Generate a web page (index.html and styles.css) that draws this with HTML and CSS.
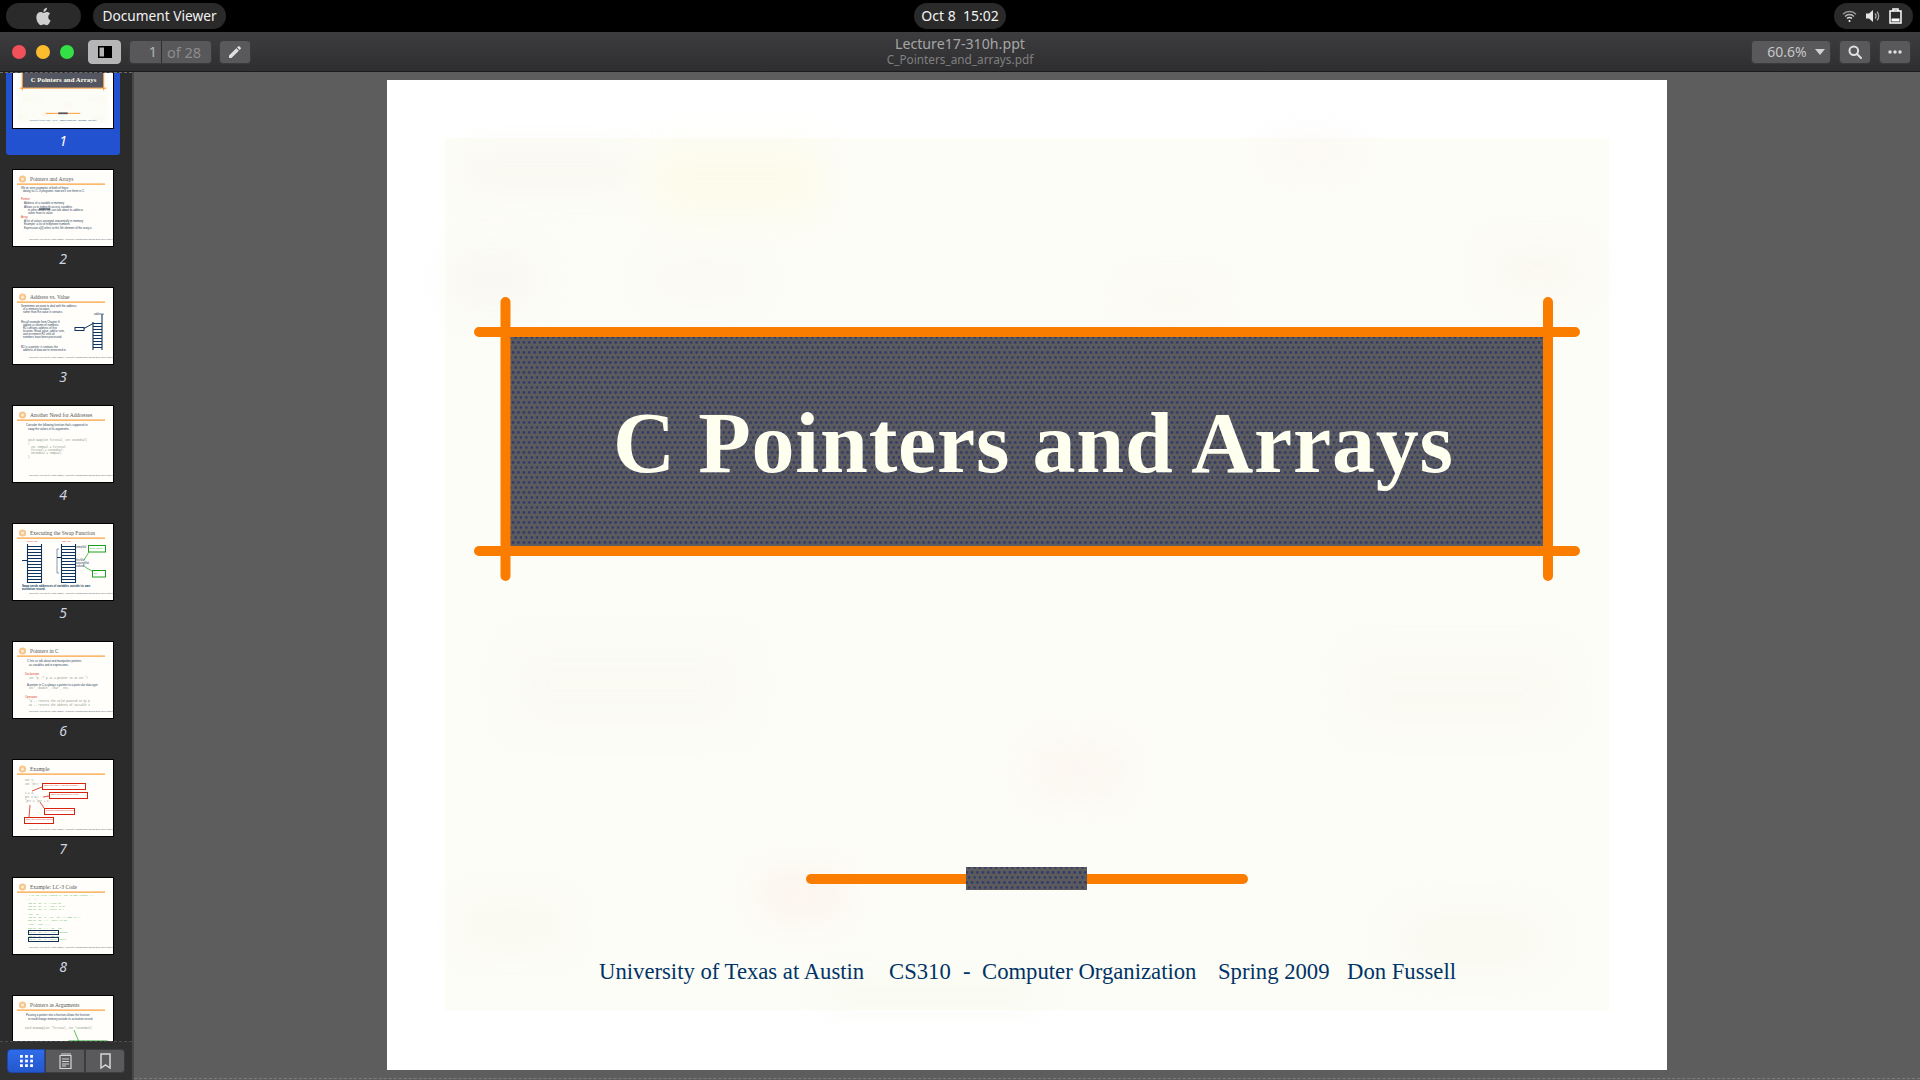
FILE: index.html
```html
<!DOCTYPE html>
<html lang="en">
<head>
    <meta charset="UTF-8">
    <title>Document Viewer</title>
    <link rel="stylesheet" href="styles.css">
</head>
<body>
    <div class="topbar">
        <div class="topbar-left">
            <div class="pill pill-apple">
                <svg width="21" height="21" viewBox="0 0 24 24"><path fill="#cfcfcf" d="M18.71 19.5c-.83 1.24-1.71 2.45-3.05 2.47-1.34.03-1.77-.79-3.29-.79-1.53 0-2 .77-3.27.82-1.31.05-2.3-1.32-3.14-2.53C4.25 17 2.94 12.45 4.7 9.39c.87-1.52 2.43-2.48 4.12-2.51 1.28-.02 2.5.87 3.29.87.78 0 2.26-1.07 3.81-.91.65.03 2.47.26 3.64 1.98-.09.06-2.17 1.28-2.15 3.81.03 3.02 2.65 4.03 2.68 4.04-.03.07-.42 1.44-1.38 2.83M13 3.5c.73-.83 1.94-1.46 2.94-1.5.13 1.17-.34 2.35-1.04 3.19-.69.85-1.83 1.51-2.95 1.42-.15-1.15.41-2.35 1.05-3.11z"/></svg>
            </div>
            <div class="pill pill-app">Document Viewer</div>
        </div>
        <div class="pill pill-clock">Oct 8  15:02</div>
        <div class="topbar-right">
            <div class="pill pill-status">
                <svg width="15" height="14" viewBox="0 0 15 14" fill="none" stroke="#d8d8d8" stroke-width="1.4"><path opacity=".65" d="M1 5.2a9.2 9.2 0 0 1 13 0"/><path opacity=".8" d="M3 7.4a6.4 6.4 0 0 1 9 0"/><path d="M5 9.6a3.5 3.5 0 0 1 5 0"/><circle cx="7.5" cy="12" r="1" fill="#fff" stroke="none"/></svg>
                <svg width="14" height="14" viewBox="0 0 14 14"><path fill="#e6e6e6" d="M0 4.5h3L7 1v12L3 9.5H0z"/><path fill="none" stroke="#aaa" stroke-width="1.3" d="M9 4.5a3.5 3.5 0 0 1 0 5M11 2.8a6 6 0 0 1 0 8.4"/></svg>
                <svg width="13" height="16" viewBox="0 0 13 16"><path fill="none" stroke="#fff" stroke-width="1.5" d="M1 3h11v12H1zM4 3V1h5v2"/><rect x="2.5" y="10.5" width="8" height="3" fill="#fff"/></svg>
            </div>
        </div>
    </div>

    <div class="toolbar">
        <div class="tool-left">
            <div class="lights">
                <span class="light light-red"></span>
                <span class="light light-yellow"></span>
                <span class="light light-green"></span>
            </div>
            <button class="tool-btn toggle-btn">
                <svg width="14" height="12" viewBox="0 0 14 12"><rect width="14" height="12" fill="#000"/><rect x="1.5" y="1.5" width="4.5" height="9" fill="#b4b4b4"/></svg>
            </button>
            <div class="page-field">
                <span class="page-num">1</span>
                <span class="page-of">of 28</span>
            </div>
            <button class="tool-btn pencil-btn">
                <svg width="16" height="16" viewBox="0 0 24 24"><path fill="#e0e0e0" d="M3 17.25V21h3.75L17.81 9.94l-3.75-3.75L3 17.25zM20.71 7.04a1 1 0 0 0 0-1.41l-2.34-2.34a1 1 0 0 0-1.41 0l-1.83 1.83 3.75 3.75 1.83-1.83z"/></svg>
            </button>
        </div>
        <div class="doc-title">
            <div class="doc-name">Lecture17-310h.ppt</div>
            <div class="doc-file">C_Pointers_and_arrays.pdf</div>
        </div>
        <div class="tool-right">
            <button class="tool-btn zoom-btn">60.6%<span class="caret"></span></button>
            <button class="tool-btn">
                <svg width="14" height="14" viewBox="0 0 14 14" fill="none" stroke="#e0e0e0" stroke-width="2"><circle cx="5.8" cy="5.8" r="4.3"/><path d="M9 9l4 4" stroke-linecap="round"/></svg>
            </button>
            <button class="tool-btn">
                <svg width="14" height="4" viewBox="0 0 14 4" fill="#e0e0e0"><circle cx="2" cy="2" r="1.7"/><circle cx="7" cy="2" r="1.7"/><circle cx="12" cy="2" r="1.7"/></svg>
            </button>
        </div>
    </div>

    <div class="workspace">
        <aside class="sidebar">
            <div class="thumbs">
                <div class="thumb-item thumb-first selected">
                    <svg class="thumb" viewBox="0 0 100 76" preserveAspectRatio="none"><use href="#slide-title" width="100" height="76"/></svg>
                    <div class="thumb-label">1</div>
                </div>
                <div class="thumb-item">
                    <svg class="thumb" viewBox="0 0 100 76">
                        <use href="#slide-chrome"/>
                        <text class="t-head" x="17" y="11">Pointers and Arrays</text>
                        <text class="t-body" x="8" y="19">We've seen examples of both of these</text>
                        <text class="t-body" x="10" y="22">dating to LC-3 programs; now we'll see them in C.</text>
                        <text class="t-red" x="8" y="30">Pointer</text>
                        <text class="t-body" x="11" y="34">Address of a variable in memory</text>
                        <text class="t-body" x="11" y="38">Allows us to indirectly access variables</text>
                        <text class="t-body" x="15" y="41">in other words, we can talk about its address</text>
                        <text class="t-body" x="15" y="44">rather than its value</text>
                        <text class="t-red" x="8" y="48">Array</text>
                        <text class="t-body" x="11" y="52">A list of values arranged sequentially in memory</text>
                        <text class="t-body" x="11" y="55">Example: a list of telephone numbers</text>
                        <text class="t-body" x="11" y="59">Expression a[4] refers to the 5th element of the array a</text>
                        <rect x="26" y="38.5" width="11" height="1" fill="#123"/>
                    </svg>
                    <div class="thumb-label">2</div>
                </div>
                <div class="thumb-item">
                    <svg class="thumb" viewBox="0 0 100 76">
                        <use href="#slide-chrome"/>
                        <text class="t-head" x="17" y="11">Address vs. Value</text>
                        <text class="t-body" x="8" y="19">Sometimes we want to deal with the address</text>
                        <text class="t-body" x="10" y="22">of a memory location,</text>
                        <text class="t-body" x="10" y="25">rather than the value it contains.</text>
                        <text class="t-body" x="8" y="35">Recall example from Chapter 6:</text>
                        <text class="t-body" x="10" y="38">adding a column of numbers.</text>
                        <text class="t-body" x="10" y="41">R2 contains address of first</text>
                        <text class="t-body" x="10" y="44">location. Read value, add to sum,</text>
                        <text class="t-body" x="10" y="47">and increment R2 until all</text>
                        <text class="t-body" x="10" y="50">numbers have been processed.</text>
                        <text class="t-body" x="8" y="60">R2 is a pointer: it contains the</text>
                        <text class="t-body" x="10" y="63">address of data we're interested in.</text>
                        <rect x="62" y="39.5" width="9" height="3" fill="none" stroke="#0d3560" stroke-width="1"/>
                        <path d="M71 40.5l9-5" stroke="#0d3560" stroke-width="1"/>
                        <path d="M80 34v28M89 34v28M89 26v8" stroke="#0d3560" stroke-width="1.1" fill="none"/>
                        <path d="M80 35.5h9M80 38.5h9M80 41.5h9M80 44.5h9M80 47.5h9M80 50.5h9M80 53.5h9M80 56.5h9M80 59.5h9" stroke="#0d3560" stroke-width="1" fill="none"/>
                        <text class="t-body" x="81" y="27">address</text>
                    </svg>
                    <div class="thumb-label">3</div>
                </div>
                <div class="thumb-item">
                    <svg class="thumb" viewBox="0 0 100 76">
                        <use href="#slide-chrome"/>
                        <text class="t-head" x="17" y="11">Another Need for Addresses</text>
                        <text class="t-body" x="13" y="20">Consider the following function that's supposed to</text>
                        <text class="t-body" x="15" y="24">swap the values of its arguments.</text>
                        <text class="t-code" x="15" y="35">void Swap(int firstVal, int secondVal)</text>
                        <text class="t-code" x="15" y="38">{</text>
                        <text class="t-code" x="18" y="42">int tempVal = firstVal;</text>
                        <text class="t-code" x="18" y="45">firstVal = secondVal;</text>
                        <text class="t-code" x="18" y="48">secondVal = tempVal;</text>
                        <text class="t-code" x="15" y="52">}</text>
                    </svg>
                    <div class="thumb-label">4</div>
                </div>
                <div class="thumb-item">
                    <svg class="thumb" viewBox="0 0 100 76">
                        <use href="#slide-chrome"/>
                        <text class="t-head" x="17" y="11">Executing the Swap Function</text>
                        <text class="t-red t-tiny" x="14" y="18">before call</text>
                        <text class="t-red t-tiny" x="49" y="18">after call</text>
                        <path d="M14.5 20v39M28.5 20v39M48.5 20v39M62.5 20v39" stroke="#0d3560" stroke-width="1.1" fill="none"/>
                        <path d="M14 22.5h14M14 25.5h14M14 28.5h14M14 31.5h14M14 34.5h14M14 37.5h14M14 40.5h14M14 43.5h14M14 46.5h14M14 49.5h14M14 52.5h14M14 55.5h14M14 58.5h14M48 22.5h14M48 25.5h14M48 28.5h14M48 31.5h14M48 34.5h14M48 37.5h14M48 40.5h14M48 43.5h14M48 46.5h14M48 49.5h14M48 52.5h14M48 55.5h14M48 58.5h14M9 36.5h5M44 33.5h4" stroke="#0d3560" stroke-width="1" fill="none"/>
                        <path d="M46 25h-2v24h2" stroke="#0d3560" stroke-width=".5" fill="none"/>
                        <rect x="75.5" y="21.5" width="17" height="6.5" fill="#fff" stroke="#1aa01a" stroke-width="1"/>
                        <rect x="79.5" y="46.5" width="13" height="6.5" fill="#fff" stroke="#1aa01a" stroke-width="1"/>
                        <path d="M76 28l-5 8M79 47l-7-4" stroke="#2cb82c" stroke-width=".8"/>
                        <text class="t-green" x="77" y="24.5">these values</text>
                        <text class="t-green" x="81" y="50">not</text>
                        <text class="t-body" x="63" y="24">tempVal</text>
                        <text class="t-body" x="63" y="37">firstVal</text>
                        <text class="t-body" x="63" y="40">secondVal</text>
                        <text class="t-body" x="63" y="43">valueA</text>
                        <text class="t-bold" x="9" y="63">Swap needs addresses of variables outside its own</text>
                        <text class="t-bold" x="9" y="66">activation record.</text>
                    </svg>
                    <div class="thumb-label">5</div>
                </div>
                <div class="thumb-item">
                    <svg class="thumb" viewBox="0 0 100 76">
                        <use href="#slide-chrome"/>
                        <text class="t-head" x="17" y="11">Pointers in C</text>
                        <text class="t-body" x="14" y="20">C lets us talk about and manipulate pointers</text>
                        <text class="t-body" x="16" y="24">as variables and in expressions.</text>
                        <text class="t-red" x="12" y="33">Declaration</text>
                        <text class="t-code" x="16" y="37">int *p;   /* p is a pointer to an int */</text>
                        <text class="t-body" x="14" y="44">A pointer in C is always a pointer to a particular data type:</text>
                        <text class="t-code" x="16" y="47">int*, double*, char*, etc.</text>
                        <text class="t-red" x="12" y="56">Operators</text>
                        <text class="t-code" x="16" y="60">*p -- returns the value pointed to by p</text>
                        <text class="t-code" x="16" y="64">&amp;z -- returns the address of variable z</text>
                    </svg>
                    <div class="thumb-label">6</div>
                </div>
                <div class="thumb-item">
                    <svg class="thumb" viewBox="0 0 100 76">
                        <use href="#slide-chrome"/>
                        <text class="t-head" x="17" y="11">Example</text>
                        <text class="t-code" x="12" y="21">int i;</text>
                        <text class="t-code" x="12" y="25">int *ptr;</text>
                        <text class="t-code" x="12" y="34">i = 4;</text>
                        <text class="t-code" x="12" y="38">ptr = &amp;i;</text>
                        <text class="t-code" x="12" y="42">*ptr = *ptr + 1;</text>
                        <rect x="29.5" y="23.5" width="43" height="6" fill="#fff" stroke="#d8230f" stroke-width="1"/>
                        <rect x="36.5" y="32.5" width="38" height="6" fill="#fff" stroke="#d8230f" stroke-width="1"/>
                        <rect x="31.5" y="48.5" width="30" height="6" fill="#fff" stroke="#d8230f" stroke-width="1"/>
                        <rect x="11.5" y="57.5" width="29" height="6" fill="#fff" stroke="#d8230f" stroke-width="1"/>
                        <path d="M29 27l-10 4M36 36l-6 1M31 48l-4-6M16 57l1-12" stroke="#d8230f" stroke-width=".8"/>
                        <text class="t-red t-tiny" x="31" y="26">store the value 4 into the memory</text>
                        <text class="t-red t-tiny" x="38" y="35">store the address of i in the</text>
                        <text class="t-red t-tiny" x="33" y="51">read the contents of memory</text>
                        <text class="t-red t-tiny" x="13" y="60">store the result into memory</text>
                    </svg>
                    <div class="thumb-label">7</div>
                </div>
                <div class="thumb-item">
                    <svg class="thumb" viewBox="0 0 100 76">
                        <use href="#slide-chrome"/>
                        <text class="t-head" x="17" y="11">Example: LC-3 Code</text>
                        <text class="t-lc" x="13" y="18">; i is 1st local (offset 0), ptr is 2nd (offset -1)</text>
                        <text class="t-lc" x="13" y="22">; i = 4;</text>
                        <text class="t-lc" x="15" y="26">AND  R0, R0, #0    ; clear R0</text>
                        <text class="t-lc" x="15" y="29">ADD  R0, R0, #4    ; put 4 in R0</text>
                        <text class="t-lc" x="15" y="32">STR  R0, R5, #0    ; store in i</text>
                        <text class="t-lc" x="13" y="37">; ptr = &amp;i;</text>
                        <text class="t-lc" x="15" y="40">ADD  R0, R5, #0    ; R0 = R5 + 0 (addr of i)</text>
                        <text class="t-lc" x="15" y="43">STR  R0, R5, #-1   ; store in ptr</text>
                        <text class="t-lc" x="13" y="47">; *ptr = *ptr + 1;</text>
                        <text class="t-lc" x="15" y="51">LDR  R0, R5, #-1   ; R0 = ptr</text>
                        <text class="t-lc" x="15" y="55">LDR  R1, R0, #0    ; load contents</text>
                        <text class="t-lc" x="15" y="58.5">ADD  R1, R1, #1    ; add one</text>
                        <text class="t-lc" x="15" y="62">STR  R1, R0, #0    ; store result</text>
                        <rect x="15.5" y="52.5" width="30" height="4" fill="none" stroke="#12305a" stroke-width="1"/>
                        <rect x="15.5" y="59.5" width="30" height="4" fill="none" stroke="#12305a" stroke-width="1"/>
                    </svg>
                    <div class="thumb-label">8</div>
                </div>
                <div class="thumb-item">
                    <svg class="thumb" viewBox="0 0 100 76">
                        <use href="#slide-chrome"/>
                        <text class="t-head" x="17" y="11">Pointers as Arguments</text>
                        <text class="t-body" x="13" y="20">Passing a pointer into a function allows the function</text>
                        <text class="t-body" x="15" y="24">to read/change memory outside its activation record.</text>
                        <text class="t-code" x="12" y="33">void NewSwap(int *firstVal, int *secondVal)</text>
                        <path d="M61 34l5 12" stroke="#2cb82c" stroke-width=".8"/>
                        <rect x="56" y="45" width="38" height="8" fill="#fff" stroke="#1aa01a" stroke-width="1"/>
                    </svg>
                </div>
            </div>
            <div class="side-tabs">
                <button class="side-tab active">
                    <svg width="13" height="12" viewBox="0 0 14 13" fill="#fff"><rect width="3" height="3"/><rect x="5.5" width="3" height="3"/><rect x="11" width="3" height="3"/><rect y="5" width="3" height="3"/><rect x="5.5" y="5" width="3" height="3"/><rect x="11" y="5" width="3" height="3"/><rect y="10" width="3" height="3"/><rect x="5.5" y="10" width="3" height="3"/><rect x="11" y="10" width="3" height="3"/></svg>
                </button>
                <button class="side-tab">
                    <svg width="13" height="16" viewBox="0 0 13 16"><path fill="none" stroke="#d6d6d6" stroke-width="1.2" d="M1 2.5h11v13H1z"/><path stroke="#d6d6d6" d="M3 0v3M5 0v3M7 0v3M9 0v3M11 0v3M3 6h7M3 8.5h7M3 11h7M3 13h4" fill="none"/></svg>
                </button>
                <button class="side-tab">
                    <svg width="11" height="16" viewBox="0 0 11 16"><path fill="none" stroke="#d6d6d6" stroke-width="1.5" d="M1 1h9v14l-4.5-3L1 15z"/></svg>
                </button>
            </div>
        </aside>

        <main class="viewer">
            <svg class="page" width="1280" height="990" viewBox="0 0 1280 990">
                <defs>
                    <pattern id="weave" width="5.4" height="10" patternUnits="userSpaceOnUse">
                        <rect width="5.4" height="10" fill="#5c5c5e"/>
                        <rect x=".6" y="1.2" width="2.5" height="2.5" fill="#2f3868"/>
                        <rect x="3.3" y="6.2" width="2.5" height="2.5" fill="#2f3868"/>
                    </pattern>
                    <filter id="soft" x="-30%" y="-30%" width="160%" height="160%"><feGaussianBlur stdDeviation="18"/></filter>
                    <symbol id="slide-title" viewBox="0 0 1280 990" preserveAspectRatio="none">
                        <rect width="1280" height="990" fill="#fff"/>
                        <rect x="58" y="58" width="1164" height="872" fill="#fdfdf7"/>
                        <g filter="url(#soft)" opacity=".35">
                            <rect x="265" y="66" width="170" height="70" fill="#f9f6d4"/>
                            <rect x="880" y="60" width="90" height="24" fill="#f7e8e2"/>
                            <rect x="70" y="70" width="180" height="40" fill="#f0f0e6"/>
                            <rect x="60" y="170" width="90" height="60" fill="#f1f1e8"/>
                            <rect x="260" y="180" width="110" height="40" fill="#f3f3ea"/>
                            <rect x="1100" y="160" width="100" height="60" fill="#f4f0e6"/>
                            <rect x="740" y="200" width="90" height="40" fill="#f5f0e6"/>
                            <rect x="120" y="560" width="240" height="90" fill="#f6f6ee"/>
                            <rect x="640" y="660" width="100" height="60" fill="#f9ece6"/>
                            <rect x="960" y="570" width="220" height="80" fill="#f5f5ec"/>
                            <rect x="370" y="790" width="90" height="50" fill="#f8e6dc"/>
                            <rect x="70" y="820" width="110" height="50" fill="#f2f2e6"/>
                            <rect x="1010" y="830" width="150" height="60" fill="#f2f3e8"/>
                            <rect x="430" y="905" width="230" height="20" fill="#e4f2dc"/>
                        </g>
                        <rect x="123" y="257" width="1033" height="209" fill="url(#weave)"/>
                        <g stroke="#fb7d00" stroke-width="10" stroke-linecap="round">
                            <path d="M92 252H1188M92 471H1188M118.5 222V496M1161 222V496"/>
                            <path d="M424 799H856"/>
                        </g>
                        <rect x="579" y="787" width="121" height="23" fill="url(#weave)"/>
                        <text class="slide-heading" x="226" y="392" textLength="840" lengthAdjust="spacing">C Pointers and Arrays</text>
                        <text class="slide-footer" y="899"><tspan x="212">University of Texas at Austin</tspan><tspan x="502">CS310</tspan><tspan x="576">-</tspan><tspan x="595">Computer Organization</tspan><tspan x="831">Spring 2009</tspan><tspan x="960">Don Fussell</tspan></text>
                    </symbol>
                    <symbol id="slide-chrome" viewBox="0 0 100 76">
                        <rect width="100" height="76" fill="#fffefa"/>
                        <circle cx="9.5" cy="9" r="3.6" fill="#f8c58a"/>
                        <circle cx="9.5" cy="9" r="1.5" fill="#fdf0dd"/>
                        <rect x="4" y="13.6" width="88" height="1" fill="#fb8a10"/>
                        <text class="t-foot" x="16" y="69.5">University of Texas at Austin  CS310 - Computer Organization  Spring 2009  Don Fussell</text>
                    </symbol>
                </defs>
                <use href="#slide-title" width="1280" height="990"/>
            </svg>
        </main>
    </div>
</body>
</html>
```

FILE: styles.css
```css
* {
    box-sizing: border-box;
}

html, body {
    margin: 0;
    padding: 0;
}

body {
    width: 1920px;
    height: 1080px;
    overflow: hidden;
    background-color: #000;
    font-family: "Noto Sans", "Open Sans", sans-serif;
}

button {
    font-family: inherit;
    padding: 0;
}

/* system bar */
.topbar {
    height: 32px;
    display: grid;
    grid-template-columns: 1fr auto 1fr;
    align-items: center;
    background-color: #000;
}

.topbar-left {
    display: flex;
    gap: 12px;
    padding-left: 6px;
}

.topbar-right {
    display: flex;
    justify-content: flex-end;
    padding-right: 7px;
}

.pill {
    height: 26px;
    border-radius: 13px;
    background-color: #2a2a2a;
    color: #f2f2f2;
    font-size: 14px;
    line-height: 24px;
    display: flex;
    align-items: center;
    justify-content: center;
}

.pill-apple {
    width: 75px;
}

.pill-app {
    width: 133px;
    font-size: 13.7px;
}

.pill-clock {
    width: 92px;
    white-space: pre;
}

.pill-status {
    width: 79px;
    gap: 9px;
    padding-right: 4px;
}

/* toolbar */
.toolbar {
    height: 40px;
    display: grid;
    grid-template-columns: 1fr auto 1fr;
    align-items: center;
    background: linear-gradient(#3d3d3f, #2e2e30);
    border-bottom: 1px solid #1b1b1b;
}

.tool-left {
    display: flex;
    align-items: center;
    padding-left: 12px;
}

.lights {
    display: flex;
    gap: 10px;
    margin-right: 14px;
}

.light {
    width: 14px;
    height: 14px;
    border-radius: 50%;
}

.light-red {
    background-color: #f2505a;
}

.light-yellow {
    background-color: #fcbc2d;
}

.light-green {
    background-color: #33e046;
}

.tool-btn {
    width: 32px;
    height: 24px;
    display: flex;
    align-items: center;
    justify-content: center;
    border: 1px solid #3a3a3a;
    border-radius: 4px;
    background-color: #59595b;
}

.toggle-btn {
    width: 33px;
    background-color: #b6b6b6;
    border-color: #b6b6b6;
}

.page-field {
    width: 83px;
    height: 24px;
    margin: 0 7px 0 8px;
    display: flex;
    align-items: center;
    border: 1px solid #3a3a3a;
    border-radius: 4px;
    background-color: #58585a;
    font-size: 14.5px;
}

.page-num {
    width: 32px;
    height: 22px;
    line-height: 21px;
    padding-right: 4px;
    text-align: right;
    color: #b4b4b4;
    border-right: 1px solid #2e2e2e;
}

.page-of {
    padding-left: 5px;
    color: #8c8c8c;
}

.doc-title {
    text-align: center;
    margin-top: -2px;
}

.doc-name {
    font-size: 14.2px;
    line-height: 17px;
    color: #a6a6a6;
}

.doc-file {
    font-size: 11.8px;
    line-height: 14px;
    color: #808080;
}

.tool-right {
    display: flex;
    justify-content: flex-end;
    gap: 8px;
    padding-right: 9px;
}

.zoom-btn {
    width: 80px;
    gap: 8px;
    padding-left: 10px;
    font-size: 14px;
    color: #c6c6c6;
}

.caret {
    width: 0;
    height: 0;
    border-left: 5px solid transparent;
    border-right: 5px solid transparent;
    border-top: 6px solid #d0d0d0;
}

/* body */
.workspace {
    height: 1008px;
    display: flex;
    background-color: #5d5d5d;
}

.sidebar {
    width: 134px;
    height: 100%;
    display: flex;
    flex-direction: column;
    background-color: #2b2b2b;
    border-right: 2px solid #474747;
}

.thumbs {
    flex: 1;
    min-height: 0;
    overflow: hidden;
    display: flex;
    flex-direction: column;
    gap: 11px;
    padding-left: 6px;
    border-top: 1px dashed #6c6c6c;
    border-bottom: 1px dashed #4e4e4e;
}

.thumb-item {
    flex: none;
    width: 114px;
    height: 107px;
    padding: 3px 6px 0;
    border-radius: 3px;
}

.thumb-first {
    margin-top: -25px;
}

.thumb-item.selected {
    background-color: #2252d0;
}

.thumb {
    display: block;
    width: 102px;
    height: 78px;
    border: 1px solid #000;
}

.thumb-label {
    height: 26px;
    line-height: 23px;
    text-align: center;
    font-size: 14px;
    font-style: italic;
    color: #cfd6e2;
}

.selected .thumb-label {
    color: #fff;
}

.side-tabs {
    flex: none;
    height: 38px;
    padding: 7px 0 0 7px;
    display: flex;
    align-items: flex-start;
    background-color: #303030;
}

.side-tab {
    width: 40px;
    height: 24px;
    display: flex;
    align-items: center;
    justify-content: center;
    border: 1px solid #3e3e3e;
    border-right-color: #3a3a3a;
    background-color: #5a5a5c;
}

.side-tab:first-child {
    width: 38px;
    border-radius: 4px 0 0 4px;
}

.side-tab:last-child {
    border-radius: 0 4px 4px 0;
}

.side-tab.active {
    background: linear-gradient(#2f6cea, #2457cc);
    border-color: #1e46a8;
}

.viewer {
    flex: 1;
    height: 1007px;
    display: flex;
    justify-content: center;
    padding-top: 8px;
    border-bottom: 1px dashed #7c7c7c;
}

.page {
    display: block;
}

/* slide text */
.slide-heading {
    font-family: "Liberation Serif", serif;
    font-weight: bold;
    font-size: 86px;
    fill: #fffff0;
}

.slide-footer {
    font-family: "Liberation Serif", serif;
    font-size: 22.7px;
    fill: #003366;
}

.t-head {
    font-family: "Liberation Serif", serif;
    font-size: 5.5px;
    fill: #555;
}

.t-body, .t-code, .t-lc, .t-red, .t-green, .t-bold, .t-foot {
    font-family: "Liberation Sans", sans-serif;
    font-size: 2.8px;
}

.t-body {
    fill: #2c4460;
}

.t-code, .t-lc {
    font-family: "Liberation Mono", monospace;
    font-size: 2.6px;
    fill: #7f8f80;
}

.t-lc {
    font-size: 2.2px;
    fill: #4fb04f;
}

.t-red {
    fill: #d8402a;
}

.t-tiny {
    font-size: 2.3px;
}

.t-green {
    fill: #1aa01a;
    font-size: 2.2px;
}

.t-bold {
    font-weight: bold;
    fill: #123f66;
}

.t-foot {
    font-size: 2.2px;
    fill: #5a6470;
}
```
